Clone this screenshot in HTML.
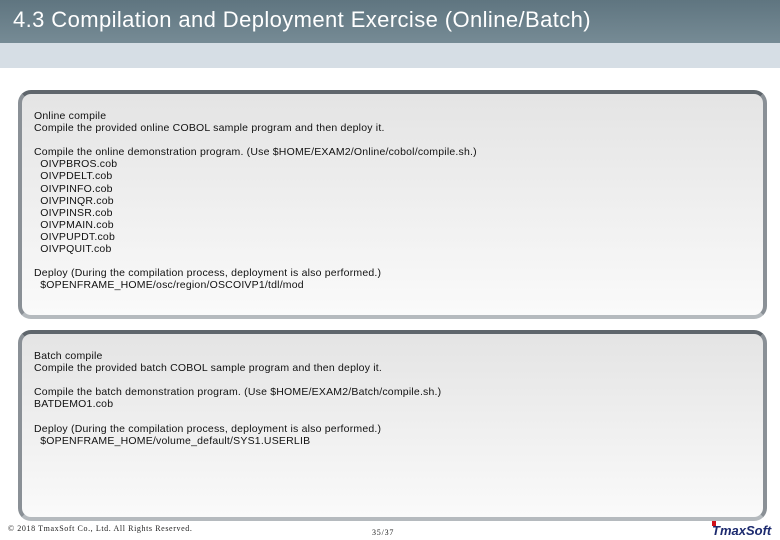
<!DOCTYPE html>
<html><head><meta charset="utf-8"><style>
body{margin:0;width:780px;height:540px;position:relative;background:#fff;font-family:"Liberation Sans",sans-serif;overflow:hidden}
.hdr{position:absolute;left:0;top:0;width:780px;height:43px;background:linear-gradient(#5f7580,#768b95)}
.hdr span{position:absolute;left:13px;top:7px;color:#fff;font-size:22px;letter-spacing:0.4px}
.band{position:absolute;left:0;top:43px;width:780px;height:25px;background:#d6dee5}
.box{position:absolute;left:18px;width:741px;border:4px solid #8a9096;border-top-color:#5f666c;border-bottom-color:#b5babe;border-radius:13px;background:linear-gradient(#e4e4e4,#fafafa);font-size:10.5px;line-height:12.1px;color:#111;letter-spacing:0.2px}
.b1{top:90px;height:221px}
.b2{top:330px;height:183px}
.t{position:absolute;left:12px;white-space:pre}
.ft{position:absolute;top:524px;font-size:8px;color:#222;font-family:"Liberation Serif",serif}
</style></head><body>
<div class="hdr"><span>4.3 Compilation and Deployment Exercise (Online/Batch)</span></div>
<div class="band"></div>
<div class="box b1"><div class="t" style="top:16px">Online compile
Compile the provided online COBOL sample program and then deploy it.

Compile the online demonstration program. (Use $HOME/EXAM2/Online/cobol/compile.sh.)
  OIVPBROS.cob
  OIVPDELT.cob
  OIVPINFO.cob
  OIVPINQR.cob
  OIVPINSR.cob
  OIVPMAIN.cob
  OIVPUPDT.cob
  OIVPQUIT.cob

Deploy (During the compilation process, deployment is also performed.)
  $OPENFRAME_HOME/osc/region/OSCOIVP1/tdl/mod</div></div>
<div class="box b2"><div class="t" style="top:16px">Batch compile
Compile the provided batch COBOL sample program and then deploy it.

Compile the batch demonstration program. (Use $HOME/EXAM2/Batch/compile.sh.)
BATDEMO1.cob

Deploy (During the compilation process, deployment is also performed.)
  $OPENFRAME_HOME/volume_default/SYS1.USERLIB</div></div>
<div class="ft" style="left:8px;letter-spacing:0.6px">© 2018 TmaxSoft Co., Ltd. All Rights Reserved.</div>
<div class="ft" style="left:372px;top:528px;letter-spacing:0.8px">35/37</div>
<div style="position:absolute;left:712px;top:521px;width:4px;height:5px;background:#d0101a"></div>
<div style="position:absolute;left:712px;top:523px;font:italic bold 13px 'Liberation Sans',sans-serif;color:#1c2a6e;letter-spacing:0px">TmaxSoft</div>
</body></html>
